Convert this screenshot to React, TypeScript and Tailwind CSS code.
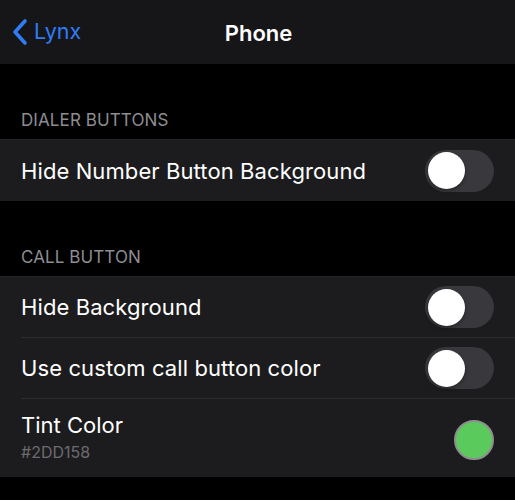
import React from "react";

function Toggle() {
  return (
    <div className="w-[69px] h-[42px] rounded-full bg-[#39393d] flex items-center px-[3px] shrink-0">
      <div className="w-[37px] h-[37px] rounded-full bg-white shadow-[0_2px_4px_rgba(0,0,0,0.35)]" />
    </div>
  );
}

function Row({ label, last }: { label: string; last?: boolean }) {
  return (
    <div className="pl-[21px] bg-[#1c1c1e]">
      <div className={"flex items-center justify-between h-[61px] pr-[21px] " + (last ? "" : "border-b border-[#2c2c2e]")}>
        <span className="text-[22px] text-white tracking-[0.1px] mt-[1px]">{label}</span>
        <Toggle />
      </div>
    </div>
  );
}

export default function App() {
  return (
    <div className="w-[515px] h-[500px] bg-black overflow-hidden" style={{ fontFamily: "Inter, 'Noto Sans', sans-serif" }}>
      <div className="h-[64px] bg-[#161618] flex items-center relative">
        <div className="flex items-center pl-[11px] gap-[5px] text-[#2f7cf6]">
          <svg width="18" height="28" viewBox="0 0 18 28">
            <path d="M14 3 L4 14 L14 25" fill="none" stroke="#2f7cf6" strokeWidth="3.6" strokeLinecap="round" strokeLinejoin="round" />
          </svg>
          <span className="text-[21.5px] mt-[-1px]">Lynx</span>
        </div>
        <div className="absolute inset-x-0 top-0 h-[64px] flex items-center justify-center pointer-events-none">
          <span className="text-[22px] font-semibold text-white pl-[2px] mt-[3px]">Phone</span>
        </div>
      </div>

      <div className="h-[44px]" />
      <div className="pl-[21px] text-[17px] text-[#8d8d92] h-[31px] leading-[24px] tracking-[0.1px]">DIALER BUTTONS</div>
      <div className="border-t border-[#232325]">
        <Row label="Hide Number Button Background" last />
      </div>

      <div className="h-[44px]" />
      <div className="pl-[21px] text-[17px] text-[#8d8d92] h-[31px] leading-[24px] tracking-[0.1px]">CALL BUTTON</div>
      <div className="border-t border-[#232325]">
        <Row label="Hide Background" />
        <Row label="Use custom call button color" />
        <div className="pl-[21px] bg-[#1c1c1e]">
          <div className="flex items-center justify-between h-[78px] pr-[21px]">
            <div className="flex flex-col mt-[-1px]">
              <span className="text-[22px] text-white leading-[26px]">Tint Color</span>
              <span className="text-[16px] text-[#6b6b70] leading-[22px] mt-[3px]">#2DD158</span>
            </div>
            <div className="w-[40px] h-[40px] rounded-full bg-[#5bca5d] border-[2px] border-[#8e8e90] mt-[4px]" />
          </div>
        </div>
      </div>
    </div>
  );
}
